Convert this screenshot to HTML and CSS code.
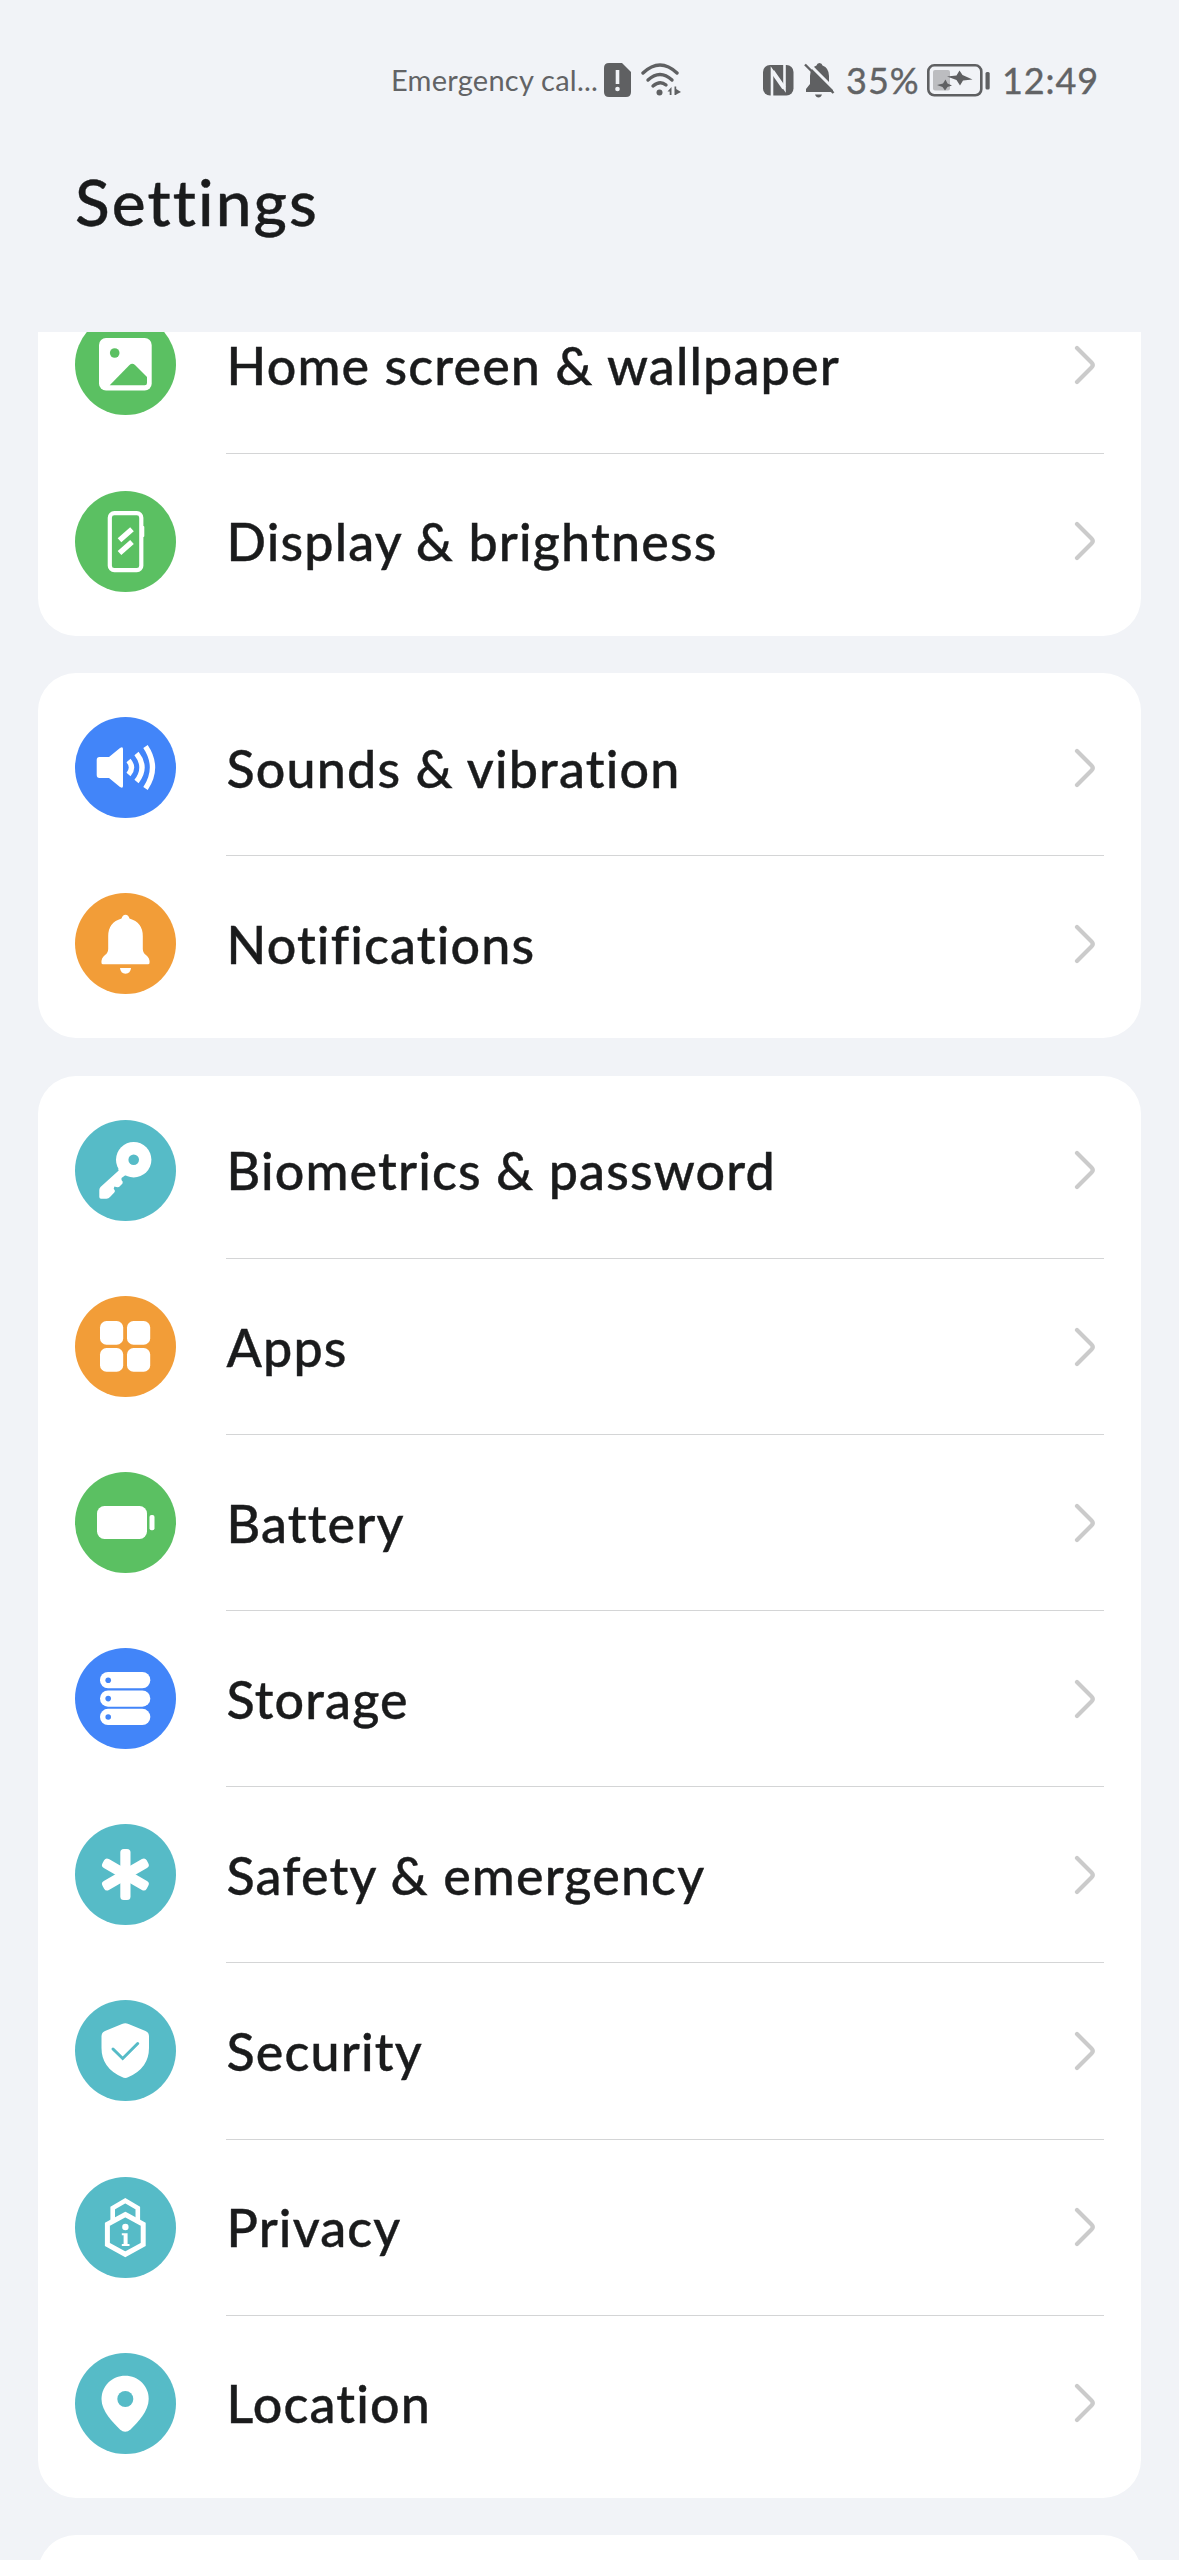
FILE: index.html
```html
<!DOCTYPE html>
<html lang="en" dir="ltr">
  <head>
    <meta charset="utf-8">
    <title>Settings</title>
    <link rel="stylesheet" href="styles.css">
  </head>
  <body>
    <div class="statusbar">
      <span class="carrier">Emergency cal...</span>
      <svg class="sim" width="28" height="34" viewBox="0 0 28 34">
        <path d="M5 0H18L27 9V29Q27 34 22 34H5Q0 34 0 29V5Q0 0 5 0Z" fill="#5f6062"/>
        <path d="M13.5 7V21" stroke="#f1f3f7" stroke-width="3.6"/>
        <circle cx="13.5" cy="26" r="2.3" fill="#f1f3f7"/>
      </svg>
      <svg class="wifi" width="40" height="34" viewBox="0 0 40 34">
        <g fill="none" stroke="#5f6062" stroke-width="3.4" stroke-linecap="round">
          <path d="M2 10Q19 -6 36 10"/>
          <path d="M7 17Q19 6 31 17"/>
          <path d="M12 23Q19 17 25 22"/>
        </g>
        <circle cx="18.5" cy="29.5" r="3" fill="#5f6062"/>
        <path d="M30.5 24V32H28.7V28.5H26.5ZM33.5 23.5H35.2V26L40 29L35.2 31.5V32H33.5Z" fill="#5f6062"/>
      </svg>
      <svg class="nfc" width="31" height="31" viewBox="0 0 31 31">
        <rect width="30.5" height="30.5" rx="7" fill="#5f6062"/>
        <path d="M9 31V5.5L21.5 23.5V0" fill="none" stroke="#f1f3f7" stroke-width="2.6"/>
        <path d="M9.5 6.5L21 23" stroke="#f1f3f7" stroke-width="4"/>
      </svg>
      <svg class="muted" width="31" height="35" viewBox="0 0 31 35">
        <path d="M15.5 0Q18 0 18.5 2.5Q25 5 25 13V20L29 26V29H2V26L6 21V13Q6 5 12.5 2.5Q13 0 15.5 0Z" fill="#5f6062"/>
        <path d="M11 31.5H18Q17 34.5 14.5 34.5Q12 34.5 11 31.5Z" fill="#5f6062"/>
        <path d="M3 -1L32 28" stroke="#f1f3f7" stroke-width="3"/>
        <path d="M1 1.5L29.5 30" stroke="#5f6062" stroke-width="2.4"/>
      </svg>
      <span class="percent">35%</span>
      <svg class="charge" width="63" height="33" viewBox="0 0 63 33">
        <rect x="6" y="6" width="17" height="20.5" rx="2" fill="#bcbdc0"/>
        <rect x="1.3" y="1.3" width="53" height="30" rx="6" fill="none" stroke="#5f6062" stroke-width="2.6"/>
        <rect x="58.5" y="8" width="4.2" height="17.5" rx="1.5" fill="#5f6062"/>
        <path d="M20 12.500L29.500 11.500L32.500 6.500L35.500 11L45.500 15.500L36 16.500L33 21.500L29.500 16ZM10 21L16 19.500L18.500 15.500L20.500 19.500L25 21.500L20.500 23L18 26.500L15.500 23Z" fill="#5f6062"/>
      </svg>
      <span class="clock">12:49</span>
    </div>

    <h1 class="title">Settings</h1>

    <div class="list">
      <div class="card scrolled">
        <a class="row">
          <svg class="icon green" viewBox="0 0 101 101">
            <rect x="24" y="24" width="52.7" height="52.5" rx="7"/>
            <circle class="cut" cx="39.7" cy="39" r="4.8"/>
            <path class="cut" d="M34.7 71.3L54.5 51Q57.3 48.5 60 51L72 63V69Q72 71.3 69.7 71.3Z"/>
          </svg>
          <span class="label">Home screen &amp; wallpaper</span>
          <svg class="chevron" viewBox="0 0 22 40"><path d="M3 3L17.5 17.5Q20 20 17.5 22.5L3 37"/></svg>
        </a>
        <a class="row">
          <svg class="icon green" viewBox="0 0 101 101">
            <rect class="line" x="34.8" y="22.2" width="31.5" height="57" rx="4.5" stroke-width="4.2"/>
            <rect x="67" y="35" width="2.3" height="11" rx="1"/>
            <path class="line" d="M44.5 49.3L57 38.3M44.5 62L57 51" stroke-width="5.5"/>
          </svg>
          <span class="label">Display &amp; brightness</span>
          <svg class="chevron" viewBox="0 0 22 40"><path d="M3 3L17.5 17.5Q20 20 17.5 22.5L3 37"/></svg>
        </a>
      </div>

      <div class="card">
        <a class="row">
          <svg class="icon blue" viewBox="0 0 101 101">
            <path d="M24.5 40H34L45 31Q48 29 48 32V69Q48 72 45 70L34 61H24.5Q21.7 61 21.7 58V43Q21.7 40 24.5 40Z"/>
            <path class="line" d="M53.5 43.5Q59.5 50.5 53.5 57.5M61.5 36.5Q72.5 50.5 61.5 64.5M70.5 29.5Q84.5 50.5 70.5 71.5" stroke-width="5.3"/>
          </svg>
          <span class="label">Sounds &amp; vibration</span>
          <svg class="chevron" viewBox="0 0 22 40"><path d="M3 3L17.5 17.5Q20 20 17.5 22.5L3 37"/></svg>
        </a>
        <a class="row">
          <svg class="icon orange" viewBox="0 0 101 101">
            <path d="M50.5 21.7Q53.5 21.7 54.5 25.5Q67.8 29.5 67.8 43V56Q68 60 71 62Q75 65 74.5 70Q74.5 71.3 73 71.3H28Q26.5 71.3 26.5 70Q26 65 30 62Q33 60 33.2 56V43Q33.2 29.5 46.5 25.5Q47.5 21.7 50.5 21.7Z"/>
            <path d="M45 75H56Q55.5 80.7 50.5 80.7Q45.5 80.7 45 75Z"/>
          </svg>
          <span class="label">Notifications</span>
          <svg class="chevron" viewBox="0 0 22 40"><path d="M3 3L17.5 17.5Q20 20 17.5 22.5L3 37"/></svg>
        </a>
      </div>

      <div class="card">
        <a class="row">
          <svg class="icon teal" viewBox="0 0 101 101">
            <circle cx="58.7" cy="39.7" r="17.7"/>
            <path d="M43 48.5L43.7 50.5L25.5 67Q24.3 68.5 24.3 70V77Q24.3 78.7 26 78.7H31.5Q33.5 78.7 35 77L39.3 72.5Q40.5 70.5 38.7 68.5L39.5 66.5Q42 67.5 44 67L47.5 63.5Q48.5 61.5 46.5 60L46.5 58L50 55.5L56 54Z"/>
            <circle class="cut" cx="58.7" cy="39.7" r="5.3"/>
          </svg>
          <span class="label">Biometrics &amp; password</span>
          <svg class="chevron" viewBox="0 0 22 40"><path d="M3 3L17.5 17.5Q20 20 17.5 22.5L3 37"/></svg>
        </a>
        <a class="row">
          <svg class="icon orange" viewBox="0 0 101 101">
            <rect x="25" y="25" width="23.2" height="23.7" rx="6.5"/>
            <rect x="52" y="25" width="23.2" height="23.7" rx="6.5"/>
            <rect x="25" y="52" width="23.2" height="23.7" rx="6.5"/>
            <rect x="52" y="52" width="23.2" height="23.7" rx="6.5"/>
          </svg>
          <span class="label">Apps</span>
          <svg class="chevron" viewBox="0 0 22 40"><path d="M3 3L17.5 17.5Q20 20 17.5 22.5L3 37"/></svg>
        </a>
        <a class="row">
          <svg class="icon green" viewBox="0 0 101 101">
            <rect x="22" y="34" width="50" height="33" rx="7.5"/>
            <rect x="74.5" y="43" width="5" height="15.3" rx="2"/>
          </svg>
          <span class="label">Battery</span>
          <svg class="chevron" viewBox="0 0 22 40"><path d="M3 3L17.5 17.5Q20 20 17.5 22.5L3 37"/></svg>
        </a>
        <a class="row">
          <svg class="icon blue" viewBox="0 0 101 101">
            <rect x="25" y="24" width="50.3" height="16.3" rx="8"/>
            <rect x="25" y="42.4" width="50.3" height="16.3" rx="8"/>
            <rect x="25" y="60.8" width="50.3" height="16.3" rx="8"/>
            <circle class="cut" cx="33.2" cy="32.2" r="2.8"/>
            <circle class="cut" cx="33.2" cy="50.6" r="2.8"/>
            <circle class="cut" cx="33.2" cy="69" r="2.8"/>
          </svg>
          <span class="label">Storage</span>
          <svg class="chevron" viewBox="0 0 22 40"><path d="M3 3L17.5 17.5Q20 20 17.5 22.5L3 37"/></svg>
        </a>
        <a class="row">
          <svg class="icon teal" viewBox="0 0 101 101">
            <rect x="45.3" y="25" width="10.2" height="51" rx="3.5"/>
            <rect x="45.3" y="25" width="10.2" height="51" rx="3.5" transform="rotate(60 50.4 50.5)"/>
            <rect x="45.3" y="25" width="10.2" height="51" rx="3.5" transform="rotate(-60 50.4 50.5)"/>
          </svg>
          <span class="label">Safety &amp; emergency</span>
          <svg class="chevron" viewBox="0 0 22 40"><path d="M3 3L17.5 17.5Q20 20 17.5 22.5L3 37"/></svg>
        </a>
        <a class="row">
          <svg class="icon teal" viewBox="0 0 101 101">
            <path d="M47 24Q50.3 22.5 53.5 24L70.5 31Q74 32.5 74 36V48Q74 68 53.5 77Q50.3 79 47 77Q26.5 68 26.5 48V36Q26.5 32.5 30 31Z"/>
            <path class="check" d="M38 49L47.7 58.5L62.7 43.5"/>
          </svg>
          <span class="label">Security</span>
          <svg class="chevron" viewBox="0 0 22 40"><path d="M3 3L17.5 17.5Q20 20 17.5 22.5L3 37"/></svg>
        </a>
        <a class="row">
          <svg class="icon teal" viewBox="0 0 101 101">
            <path class="line" d="M37.7 46V31L50.3 23.7L62.8 31V46" stroke-width="4.6"/>
            <path class="line" d="M50.3 37.5L68.2 47.3V67.5L50.3 77.3L32.4 67.5V47.3Z" stroke-width="5"/>
            <circle cx="50.4" cy="50" r="3.2"/>
            <path d="M46.8 56.3H52.6V67H54.5V69H46.8V67H48.6V58.3H46.8Z"/>
          </svg>
          <span class="label">Privacy</span>
          <svg class="chevron" viewBox="0 0 22 40"><path d="M3 3L17.5 17.5Q20 20 17.5 22.5L3 37"/></svg>
        </a>
        <a class="row">
          <svg class="icon teal" viewBox="0 0 101 101">
            <path d="M50.2 22.7C63.5 22.7 73.7 33 73.7 46C73.7 58 63 69 55.5 76.5Q50.2 81 45 76.5C37.5 69 26.5 58 26.5 46C26.5 33 37 22.7 50.2 22.7Z"/>
            <circle class="cut" cx="50.3" cy="46" r="8"/>
          </svg>
          <span class="label">Location</span>
          <svg class="chevron" viewBox="0 0 22 40"><path d="M3 3L17.5 17.5Q20 20 17.5 22.5L3 37"/></svg>
        </a>
      </div>

      <div class="card next"></div>
    </div>
  </body>
</html>
```
FILE: styles.css
```css
html, body {
  margin: 0;
  padding: 0;
}

body {
  display: flex;
  flex-direction: column;
  box-sizing: border-box;
  width: 1179px;
  height: 2560px;
  overflow: hidden;
  background-color: #f1f3f7;
  color: #1a1b1c;
  font-family: Lato, "Open Sans", sans-serif;
  font-variant-ligatures: none;
}

/* Status bar */
.statusbar {
  display: flex;
  align-items: center;
  box-sizing: border-box;
  height: 160px;
  padding-left: 391px;
  color: #626365;
  white-space: nowrap;
}

.statusbar svg {
  flex: none;
}

.statusbar span {
  flex: none;
  line-height: 40px;
}

.carrier {
  width: 213px;
  font-size: 29px;
  letter-spacing: 0.25px;
}

.sim {
  margin-right: 9px;
}

.wifi {
  margin-right: 82px;
}

.nfc {
  margin-right: 10px;
}

.muted {
  margin-right: 11px;
}

.percent {
  width: 81px;
  font-size: 36px;
  letter-spacing: 1px;
  -webkit-text-stroke: 0.4px #626365;
}

.charge {
  margin-right: 12px;
}

.clock {
  font-size: 36px;
  letter-spacing: 0.9px;
  -webkit-text-stroke: 0.4px #626365;
}

.title {
  height: 172px;
  margin: 0;
  padding-left: 75px;
  box-sizing: border-box;
  font-size: 64px;
  font-weight: 500;
  line-height: 84px;
  letter-spacing: 2.1px;
  -webkit-text-stroke: 0.4px #1a1b1c;
}

/* Scrolling list, clipped under the title */
.list {
  display: flex;
  flex-direction: column;
  gap: 37.4px;
  flex: 1;
  overflow: hidden;
  padding: 0 38px;
}

.card {
  flex: none;
  padding: 6.6px 37px;
  border-radius: 38px;
  background-color: white;
}

.scrolled {
  margin-top: -61.7px;
}

.next {
  height: 180px;
}

.row {
  display: flex;
  align-items: center;
  position: relative;
  height: 176.1px;
}

/* divider starts under the label */
.row + .row::before {
  content: "";
  position: absolute;
  top: -0.5px;
  left: 151px;
  right: 0;
  height: 1px;
  background-color: #d4d5d6;
}

.label {
  flex: 1;
  font-size: 52px;
  font-weight: 500;
  line-height: 72px;
  letter-spacing: 1.15px;
  white-space: nowrap;
  -webkit-text-stroke: 0.4px #1a1b1c;
}

.icon {
  flex: none;
  width: 101px;
  height: 101px;
  margin-right: 50.5px;
  border-radius: 50%;
  fill: white;
}

.icon .line {
  fill: none;
  stroke: white;
}

.icon .cut {
  fill: currentColor;
}

.icon .check {
  fill: none;
  stroke: currentColor;
  stroke-width: 3;
  stroke-linecap: round;
}

.green {
  color: #5bc062;
  background-color: #5bc062;
}

.blue {
  color: #4285f9;
  background-color: #4285f9;
}

.orange {
  color: #f29d38;
  background-color: #f29d38;
}

.teal {
  color: #56bbc7;
  background-color: #56bbc7;
}

.chevron {
  flex: none;
  width: 22px;
  height: 40px;
  margin-right: 8.5px;
  fill: none;
  stroke: #cbcbcb;
  stroke-width: 4.2;
  stroke-linecap: round;
}
```
